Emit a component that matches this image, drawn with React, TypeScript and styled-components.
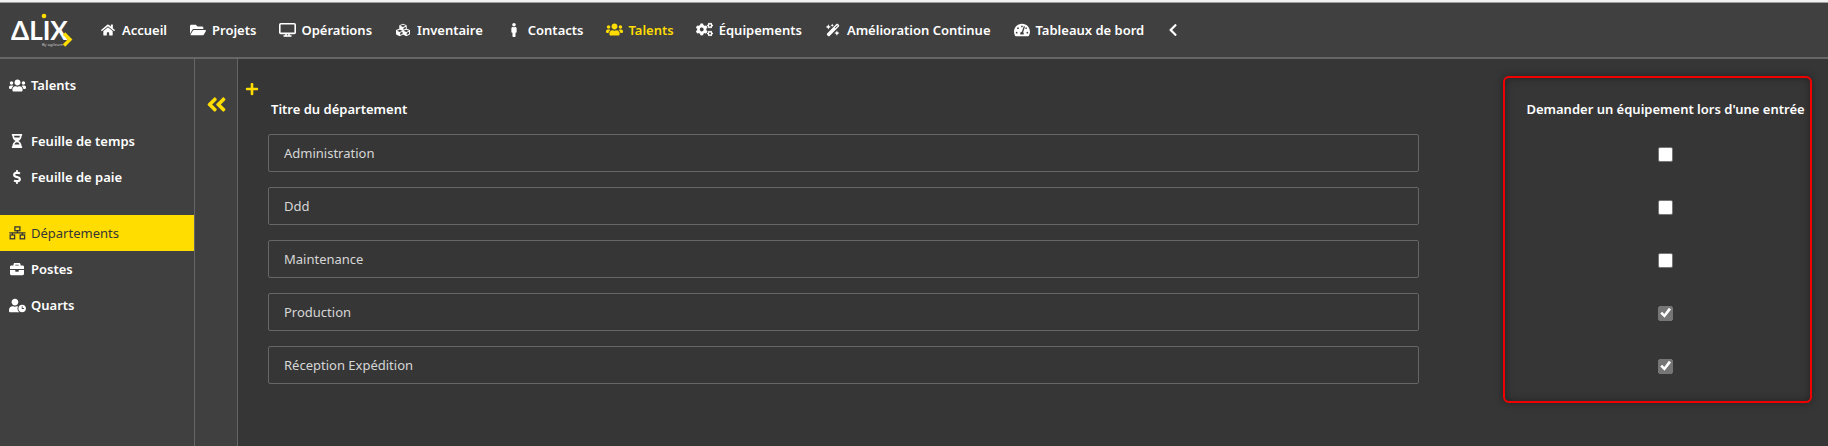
import type { ReactNode } from 'react';
import styled, { createGlobalStyle } from 'styled-components';
import {
  FaAngleDoubleLeft,
  FaBriefcase,
  FaChevronLeft,
  FaCogs,
  FaCubes,
  FaDollarSign,
  FaFolderOpen,
  FaHome,
  FaHourglassHalf,
  FaMale,
  FaPlus,
  FaTachometerAlt,
  FaUserClock,
  FaUsers,
} from 'react-icons/fa';
import { FaWandMagicSparkles } from 'react-icons/fa6';

const color = {
  bar: '#404040',
  page: '#363636',
  line: '#666666',
  accent: '#ffdd00',
  text: '#ffffff',
  field: '#d6d6d6',
};

const GlobalStyle = createGlobalStyle`
  *, *::before, *::after { box-sizing: border-box; }
  body {
    margin: 0;
    background: ${color.page};
    color: ${color.text};
    font: 400 13px/20px "Noto Sans", "Segoe UI", sans-serif;
  }
  button, input { font: inherit; color: inherit; }
`;

const Page = styled.div`
  display: flex;
  flex-direction: column;
  min-height: 100vh;
`;

const Header = styled.header`
  display: flex;
  align-items: center;
  height: 59px;
  padding: 0 11px;
  background: ${color.bar};
  border-top: 2px solid #f1f1f1;
  border-bottom: 2px solid ${color.line};
  box-shadow: inset 0 1px 0 #a0a0a0;
`;

const LogoLink = styled.a`
  display: flex;
  flex: none;
  width: 88px;
`;

const Nav = styled.nav`
  display: flex;
  align-items: center;
  gap: 22px;
`;

const IconBox = styled.span`
  display: inline-flex;
  flex: none;
  align-items: center;
  justify-content: center;
  width: 18px;
  font-size: 14px;
`;

const NavLink = styled.a<{ $active?: boolean }>`
  display: flex;
  align-items: center;
  gap: 5px;
  color: ${p => (p.$active ? color.accent : color.text)};
  font-weight: 600;
  text-decoration: none;
  white-space: nowrap;
`;

const IconButton = styled.button<{ $size: number; $accent?: boolean }>`
  display: inline-flex;
  align-items: center;
  justify-content: center;
  padding: 0;
  border: 0;
  background: none;
  color: ${p => (p.$accent ? color.accent : color.text)};
  font-size: ${p => p.$size}px;
  cursor: pointer;
`;

const Body = styled.div`
  display: flex;
  flex: 1;
`;

const Sidebar = styled.nav`
  display: flex;
  flex: none;
  flex-direction: column;
  gap: 20px;
  width: 195px;
  padding: 8px 0;
  background: ${color.bar};
  border-right: 1px solid ${color.line};
`;

const SideLink = styled.a<{ $active?: boolean }>`
  display: flex;
  align-items: center;
  gap: 5px;
  height: 36px;
  padding: 0 8px;
  background: ${p => (p.$active ? color.accent : 'transparent')};
  color: ${p => (p.$active ? color.page : color.text)};
  font-weight: ${p => (p.$active ? 400 : 600)};
  text-decoration: none;
`;

const CollapseStrip = styled.div`
  display: flex;
  flex: none;
  align-items: flex-start;
  justify-content: center;
  width: 43px;
  padding-top: 34px;
  background: ${color.bar};
  border-right: 1px solid ${color.line};
`;

const Main = styled.main`
  position: relative;
  flex: 1;
  min-width: 0;
  padding: 22px 0;
`;

const Toolbar = styled.div`
  display: flex;
  height: 16px;
  padding: 0 7px;
`;

const Table = styled.table`
  width: 100%;
  border-collapse: collapse;
`;

const TitleHead = styled.th`
  height: 29px;
  padding: 0 33px 5px;
  font-weight: 600;
  text-align: left;
`;

const OptionHead = styled.th`
  width: 325px;
  padding: 0 0 5px;
  font-weight: 600;
  white-space: nowrap;
`;

const TitleCell = styled.td`
  height: 53px;
  padding: 0 84px 0 30px;
`;

const OptionCell = styled.td`
  padding: 0;
  text-align: center;
`;

const TitleInput = styled.input`
  display: block;
  width: 100%;
  height: 38px;
  padding: 0 15px;
  border: 1px solid ${color.line};
  border-radius: 2px;
  background: transparent;
  color: ${color.field};
  outline: none;
`;

const Check = styled.input`
  appearance: none;
  display: inline-grid;
  place-content: center;
  width: 15px;
  height: 15px;
  margin: 0;
  border: 1px solid #767676;
  border-radius: 2px;
  background: #ffffff;
  vertical-align: middle;

  &:checked {
    background: #767676;
  }
  &:checked::before {
    content: "";
    width: 12px;
    height: 12px;
    background: #ffffff;
    clip-path: polygon(6% 54%, 22% 40%, 40% 58%, 78% 6%, 96% 20%, 42% 90%);
  }
`;

const Highlight = styled.div`
  position: absolute;
  top: 17px;
  right: 16px;
  width: 309px;
  height: 327px;
  border: 2px solid #f00000;
  border-radius: 6px;
  box-shadow: 0 0 8px rgba(0, 0, 0, 0.35), inset 0 0 8px rgba(0, 0, 0, 0.35);
  pointer-events: none;
`;

const Wordmark = styled.text`
  fill: ${color.text};
  font: 700 26px Lato, sans-serif;
`;

const Tagline = styled.text`
  fill: #c8c8c8;
  font: 400 4px "Noto Sans", sans-serif;
`;

const Logo = () => (
  <svg width="64" height="36" viewBox="0 0 64 36" role="img" aria-label="Alix by agileum">
    <Wordmark x="0" y="28">ΔLIX</Wordmark>
    <Tagline x="31" y="34">By agileum</Tagline>
    <circle cx="33" cy="4" r="2.3" fill={color.accent} />
    <path d="M53 21.500l6 6-6 6" fill="none" stroke={color.accent} strokeWidth="3.4" />
  </svg>
);

const DesktopIcon = () => (
  <svg width="17" height="14" viewBox="0 0 17 14" fill="none" stroke="currentColor" strokeWidth="1.6">
    <rect x="0.8" y="0.8" width="15.4" height="9.6" rx="1" />
    <path d="M7 10.5v2.5M10 10.5v2.5" />
    <path d="M4.5 13h8" />
  </svg>
);

const NetworkIcon = () => (
  <svg width="17" height="14" viewBox="0 0 17 14" fill="none" stroke="currentColor" strokeWidth="1.3">
    <rect x="5.9" y="0.9" width="5" height="3.8" />
    <rect x="1.2" y="9" width="4.4" height="3.8" />
    <rect x="11.2" y="9" width="4.4" height="3.8" />
    <path d="M0.3 6.8h16.2M8.4 4.7v2.1M3.4 6.8V9M13.4 6.8V9" />
  </svg>
);

type Item = { label: string; icon: ReactNode; active?: boolean };

const navItems: Item[] = [
  { label: 'Accueil', icon: <FaHome /> },
  { label: 'Projets', icon: <FaFolderOpen size={16} /> },
  { label: 'Opérations', icon: <DesktopIcon /> },
  { label: 'Inventaire', icon: <FaCubes /> },
  { label: 'Contacts', icon: <FaMale /> },
  { label: 'Talents', icon: <FaUsers size={17} />, active: true },
  { label: 'Équipements', icon: <FaCogs size={17} /> },
  { label: 'Amélioration Continue', icon: <FaWandMagicSparkles /> },
  { label: 'Tableaux de bord', icon: <FaTachometerAlt size={16} /> },
];

const sideGroups: Item[][] = [
  [{ label: 'Talents', icon: <FaUsers size={17} /> }],
  [
    { label: 'Feuille de temps', icon: <FaHourglassHalf /> },
    { label: 'Feuille de paie', icon: <FaDollarSign /> },
  ],
  [
    { label: 'Départements', icon: <NetworkIcon />, active: true },
    { label: 'Postes', icon: <FaBriefcase /> },
    { label: 'Quarts', icon: <FaUserClock size={17} /> },
  ],
];

const departments = [
  { title: 'Administration', equipment: false },
  { title: 'Ddd', equipment: false },
  { title: 'Maintenance', equipment: false },
  { title: 'Production', equipment: true },
  { title: 'Réception Expédition', equipment: true },
];

export default function App() {
  return (
    <Page>
      <GlobalStyle />
      <Header>
        <LogoLink href="#accueil">
          <Logo />
        </LogoLink>
        <Nav aria-label="Navigation principale">
          {navItems.map(item => (
            <NavLink key={item.label} href="#" $active={item.active}>
              <IconBox>{item.icon}</IconBox>
              {item.label}
            </NavLink>
          ))}
          <IconButton type="button" $size={14} aria-label="Réduire le menu">
            <FaChevronLeft />
          </IconButton>
        </Nav>
      </Header>
      <Body>
        <Sidebar aria-label="Talents">
          {sideGroups.map(group => (
            <div key={group[0].label}>
              {group.map(item => (
                <SideLink key={item.label} href="#" $active={item.active}>
                  <IconBox>{item.icon}</IconBox>
                  {item.label}
                </SideLink>
              ))}
            </div>
          ))}
        </Sidebar>
        <CollapseStrip>
          <IconButton type="button" $size={23} $accent aria-label="Replier le panneau">
            <FaAngleDoubleLeft />
          </IconButton>
        </CollapseStrip>
        <Main>
          <Toolbar>
            <IconButton type="button" $size={14} $accent aria-label="Ajouter un département">
              <FaPlus />
            </IconButton>
          </Toolbar>
          <Table>
            <thead>
              <tr>
                <TitleHead scope="col" id="titre">Titre du département</TitleHead>
                <OptionHead scope="col" id="equipement">Demander un équipement lors d'une entrée</OptionHead>
              </tr>
            </thead>
            <tbody>
              {departments.map(d => (
                <tr key={d.title}>
                  <TitleCell>
                    <TitleInput type="text" defaultValue={d.title} aria-labelledby="titre" />
                  </TitleCell>
                  <OptionCell>
                    <Check type="checkbox" defaultChecked={d.equipment} aria-labelledby="equipement" />
                  </OptionCell>
                </tr>
              ))}
            </tbody>
          </Table>
          <Highlight />
        </Main>
      </Body>
    </Page>
  );
}
